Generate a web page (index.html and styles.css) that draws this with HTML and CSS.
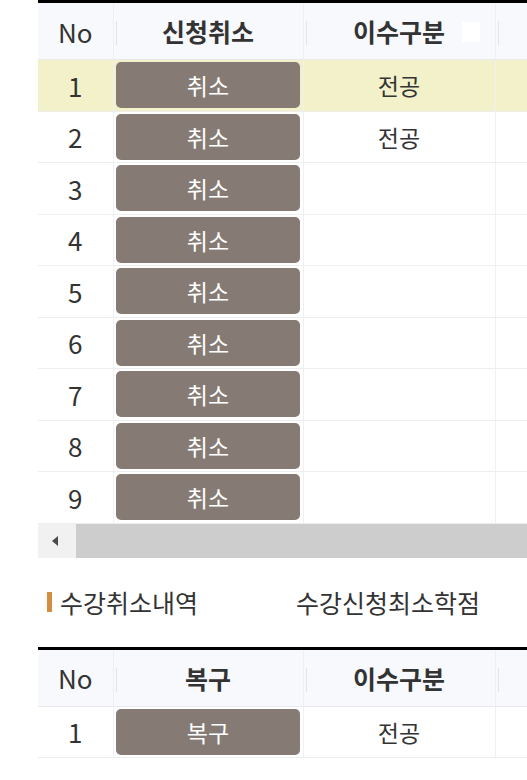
FILE: index.html
```html
<!DOCTYPE html>
<html lang="ko">

<head>
    <meta charset="UTF-8">
    <meta name="viewport" content="width=device-width, initial-scale=1.0">
    <title>수강신청 취소</title>
    <link rel="stylesheet" href="styles.css">
</head>

<body>
    <div class="grid-wrap">
        <table class="grid">
            <colgroup>
                <col class="col-no">
                <col class="col-btn">
                <col class="col-type">
                <col class="col-rest">
            </colgroup>
            <thead>
                <tr>
                    <th class="normal">No</th>
                    <th><span class="resizer"></span>신청취소</th>
                    <th><span class="resizer"></span>이수구분<span class="check"></span></th>
                    <th><span class="resizer"></span></th>
                </tr>
            </thead>
            <tbody id="applyRows"></tbody>
        </table>
    </div>
    <div class="hscroll">
        <div class="hscroll-btn"><span class="arrow-left"></span></div>
        <div class="hscroll-thumb"></div>
    </div>

    <div class="section-title">
        <span class="bar"></span>
        <span>수강취소내역</span>
        <span class="min-credit">수강신청최소학점</span>
    </div>

    <div class="grid-wrap">
        <table class="grid">
            <colgroup>
                <col class="col-no">
                <col class="col-btn">
                <col class="col-type">
                <col class="col-rest">
            </colgroup>
            <thead>
                <tr>
                    <th class="normal">No</th>
                    <th><span class="resizer"></span>복구</th>
                    <th><span class="resizer"></span>이수구분</th>
                    <th><span class="resizer"></span></th>
                </tr>
            </thead>
            <tbody>
                <tr>
                    <td class="num">1</td>
                    <td><button class="row-btn">복구</button></td>
                    <td>전공</td>
                    <td></td>
                </tr>
            </tbody>
        </table>
    </div>

    <script>
        const rows = [
            { type: '전공' },
            { type: '전공' },
            { type: '' },
            { type: '' },
            { type: '' },
            { type: '' },
            { type: '' },
            { type: '' },
            { type: '' }
        ]
        const tbody = document.querySelector('#applyRows')

        rows.forEach((row, i) => {
            const tr = document.createElement('tr')
            if (i === 0) {
                tr.classList.add('selected')
            }
            tr.innerHTML = `<td class="num">${i + 1}</td>
                <td><button class="row-btn">취소</button></td>
                <td>${row.type}</td>
                <td></td>`
            tbody.appendChild(tr)
        })
    </script>
</body>

</html>
```

FILE: styles.css
```css
body {
    margin: 0;
    background-color: #fff;
    font-family: "Noto Sans CJK KR", "Noto Sans", sans-serif;
    color: #333;
}

.grid-wrap {
    margin-left: 38px;
    overflow: hidden;
}

.grid {
    width: 600px;
    table-layout: fixed;
    border-collapse: collapse;
    border-top: 3px solid #000;
}

.col-no {
    width: 75px;
}

.col-btn {
    width: 190px;
}

.col-type {
    width: 192px;
}

.grid th {
    position: relative;
    height: 56px;
    padding: 0;
    background-color: #f8f9fd;
    font-size: 25px;
    font-weight: bold;
    color: #333;
    border-bottom: 1px solid #e8eaee;
    border-left: 1px solid #eef0f3;
}

.grid th:first-child {
    border-left: none;
}

.grid th.normal {
    font-weight: normal;
    font-size: 26px;
}

.resizer {
    position: absolute;
    left: 2px;
    top: 18px;
    width: 1px;
    height: 24px;
    background-color: #e3e3e3;
}

.check {
    position: absolute;
    right: 15px;
    top: 19px;
    width: 18px;
    height: 20px;
    background-color: #fff;
}

.grid td {
    height: 50.5px;
    padding: 0;
    text-align: center;
    font-size: 23px;
    color: #333;
    border-bottom: 1px solid #eeeeee;
    border-left: 1px solid #f0f0f0;
}

.grid td.num {
    font-size: 26px;
}

.grid td:first-child {
    border-left: none;
}

.grid tr.selected td {
    background-color: #f3f1c9;
}

.row-btn {
    display: block;
    width: 184px;
    height: 46px;
    margin: 0 auto;
    border: none;
    border-radius: 5px;
    background-color: #867b74;
    color: #fff;
    font-family: inherit;
    font-size: 23px;
    cursor: pointer;
}

.hscroll {
    display: flex;
    height: 34px;
    margin-left: 38px;
}

.hscroll-btn {
    width: 38px;
    display: flex;
    align-items: center;
    justify-content: center;
    background-color: #f1f1f1;
}

.arrow-left {
    width: 0;
    height: 0;
    margin-right: 4px;
    border-top: 5px solid transparent;
    border-bottom: 5px solid transparent;
    border-right: 6px solid #4a4a4a;
}

.hscroll-thumb {
    flex-grow: 1;
    background-color: #cdcdcd;
}

.section-title {
    display: flex;
    align-items: center;
    height: 89px;
    padding-left: 47px;
    font-size: 25px;
    color: #333;
}

.bar {
    width: 5px;
    height: 20px;
    margin-right: 8px;
    background-color: #d28d40;
}

.min-credit {
    margin-left: 98px;
}
```
